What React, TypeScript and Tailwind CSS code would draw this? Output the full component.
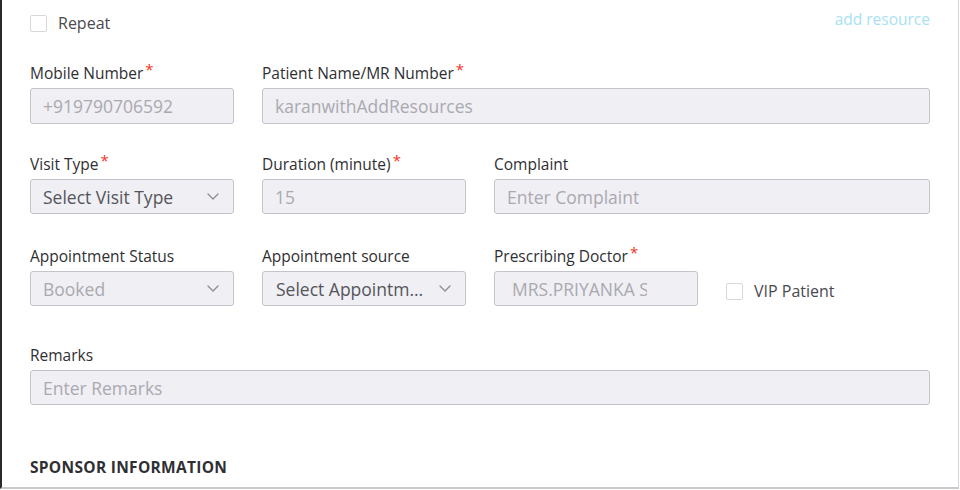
const font = { fontFamily: '"Open Sans", "Noto Sans", Arial, sans-serif' };

function Req() {
  return <span className="ml-[2px] text-[15px] leading-none text-[#f5331c] relative -top-[4px]">*</span>;
}

function Label({ text, required }: { text: string; required?: boolean }) {
  return (
    <div className="h-[20px] mb-[5px] text-[15.5px] leading-[20px] text-[#2f2f33] whitespace-nowrap">
      {text}
      {required && <Req />}
    </div>
  );
}

function Chevron() {
  return (
    <svg width="12" height="7" viewBox="0 0 12 7" fill="none" className="shrink-0">
      <path d="M1 1l5 5 5-5" stroke="#8b8b91" strokeWidth="1.3" strokeLinecap="round" strokeLinejoin="round" />
    </svg>
  );
}

function Box({ value, muted = true, select, tall }: { value: string; muted?: boolean; select?: boolean; tall?: boolean }) {
  return (
    <div
      className={`${tall ? 'h-[36px]' : 'h-[35px]'} flex items-center justify-between pl-[12px] pr-[14px] bg-[#f0eff4] border border-[#c4c3cb] rounded-[3px]`}
    >
      <span className={`text-[17.5px] leading-[24px] truncate ${muted ? 'text-[#aaa9b0]' : 'text-[#55555b]'}`}>{value}</span>
      {select && <Chevron />}
    </div>
  );
}

function Check() {
  return <span className="w-[17px] h-[17px] border border-[#d8d8dc] rounded-[2px] bg-white shrink-0" />;
}

export default function App() {
  return (
    <div style={font} className="w-[959px] h-[489px] bg-white border-l-2 border-l-[#2a2a2a] border-r border-r-[#d4d3d9] border-b-2 border-b-[#c9c8cf] px-[28px]">
      <div className="pt-[12px] h-[32px] flex items-center justify-between">
        <div className="flex items-center gap-[11px] pt-[2px]">
          <Check />
          <span className="text-[16px] text-[#4a4a4f]">Repeat</span>
        </div>
        <a className="text-[15.5px] text-[#a7e1f5] pb-[4px]">add resource</a>
      </div>

      <div className="mt-[31px] grid grid-cols-[204px_204px_1fr] gap-x-[28px]">
        <div>
          <Label text="Mobile Number" required />
          <Box value="+919790706592" tall />
        </div>
        <div className="col-span-2">
          <Label text="Patient Name/MR Number" required />
          <Box value="karanwithAddResources" tall />
        </div>
      </div>

      <div className="mt-[30px] grid grid-cols-[204px_204px_1fr] gap-x-[28px]">
        <div>
          <Label text="Visit Type" required />
          <Box value="Select Visit Type" muted={false} select />
        </div>
        <div>
          <Label text="Duration (minute)" required />
          <Box value="15" />
        </div>
        <div>
          <Label text="Complaint" />
          <Box value="Enter Complaint" />
        </div>
      </div>

      <div className="mt-[32px] grid grid-cols-[204px_204px_1fr] gap-x-[28px]">
        <div>
          <Label text="Appointment Status" />
          <Box value="Booked" select />
        </div>
        <div>
          <Label text="Appointment source" />
          <div className="h-[35px] flex items-center justify-between pl-[13px] pr-[14px] bg-[#f0eff4] border border-[#c4c3cb] rounded-[3px]">
            <span className="text-[17.5px] leading-[24px] text-[#55555b] whitespace-nowrap">Select Appointm…</span>
            <Chevron />
          </div>
        </div>
        <div className="flex items-end gap-[28px]">
          <div className="w-[204px]">
            <Label text="Prescribing Doctor" required />
            <div className="h-[35px] flex items-center pl-[17px] bg-[#f0eff4] border border-[#c4c3cb] rounded-[3px]">
              <span className="w-[135px] overflow-hidden whitespace-nowrap text-[17.5px] leading-[24px] text-[#aaa9b0]">MRS.PRIYANKA SHARMA</span>
            </div>
          </div>
          <div className="h-[35px] flex items-center gap-[11px] pt-[5px]">
            <Check />
            <span className="text-[16px] text-[#4a4a4f]">VIP Patient</span>
          </div>
        </div>
      </div>

      <div className="mt-[39px]">
        <Label text="Remarks" />
        <Box value="Enter Remarks" />
      </div>

      <div className="mt-[52px] h-[20px] text-[15.5px] leading-[20px] font-bold text-[#2f2f33] tracking-[0.3px]">
        SPONSOR INFORMATION
      </div>
    </div>
  );
}
